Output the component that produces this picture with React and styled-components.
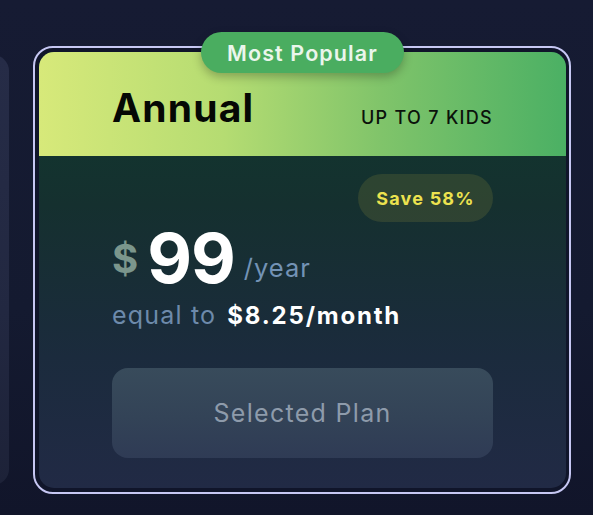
import React from "react";
import styled, { createGlobalStyle } from "styled-components";

const Global = createGlobalStyle`
  html, body { margin: 0; padding: 0; }
  body {
    width: 593px;
    height: 515px;
    overflow: hidden;
    background: linear-gradient(180deg, #161b33 0%, #141a30 60%, #11152a 100%);
    font-family: Inter, "Noto Sans", sans-serif;
  }
`;

const Stage = styled.div`
  height: 515px;
  display: flex;
  align-items: center;
  overflow: hidden;
`;

const Track = styled.div`
  display: flex;
  align-items: center;
  gap: 24px;
  margin-left: -231px;
  margin-top: 25px;
`;

const SideCard = styled.div`
  width: 240px;
  height: 430px;
  flex-shrink: 0;
  border-radius: 16px;
  background: linear-gradient(180deg, #262c47 0%, #222841 60%, #1d2238 100%);
`;

const Frame = styled.div`
  position: relative;
  width: 538px;
  height: 448px;
  box-sizing: border-box;
  flex-shrink: 0;
  border: 2px solid #c6c7f3;
  border-radius: 20px;
  padding: 4px 3px 4px 4px;
  background: #10152a;
`;

const Badge = styled.div`
  position: absolute;
  top: -16px;
  left: 166px;
  width: 203px;
  height: 41px;
  border-radius: 21px;
  background: #4aad60;
  color: #eaf6ec;
  font-size: 21.5px;
  font-weight: 600;
  letter-spacing: 1.1px;
  display: flex;
  align-items: center;
  justify-content: center;
  box-shadow: 0 4px 10px rgba(0, 0, 0, 0.25);
  z-index: 2;
`;

const Inner = styled.div`
  height: 100%;
  border-radius: 15px;
  overflow: hidden;
  display: flex;
  flex-direction: column;
  background: linear-gradient(180deg, #0f3a2e 0%, #15302f 35%, #1b2b3d 70%, #212a45 100%);
`;

const Header = styled.div`
  height: 104px;
  flex-shrink: 0;
  box-sizing: border-box;
  padding: 0 73px;
  display: flex;
  align-items: center;
  justify-content: space-between;
  background: linear-gradient(90deg, #d7e97a 0%, #b5dc72 35%, #80c46a 65%, #4bb064 100%);
`;

const PlanName = styled.div`
  font-size: 39px;
  font-weight: 700;
  color: #050805;
  letter-spacing: 1.2px;
  margin-top: 6px;
`;

const PlanLimit = styled.div`
  font-size: 18px;
  font-weight: 500;
  color: #0b120b;
  letter-spacing: 1.3px;
  margin-top: 26px;
`;

const Body = styled.div`
  flex: 1;
  padding: 18px 73px 30px;
  display: flex;
  flex-direction: column;
`;

const SaveRow = styled.div`
  display: flex;
  justify-content: flex-end;
`;

const SavePill = styled.div`
  width: 135px;
  height: 48px;
  border-radius: 24px;
  background: rgba(180, 170, 60, 0.16);
  color: #ece24f;
  font-size: 18px;
  font-weight: 700;
  letter-spacing: 1.2px;
  display: flex;
  align-items: center;
  justify-content: center;
`;

const PriceRow = styled.div`
  display: flex;
  align-items: baseline;
  margin-top: 2px;
  height: 70px;
`;

const Currency = styled.span`
  font-size: 40px;
  font-weight: 700;
  color: #7b968c;
  margin-right: 9px;
  margin-bottom: 11px;
  align-self: flex-end;
`;

const Amount = styled.span`
  font-size: 69px;
  font-weight: 700;
  color: #ffffff;
  letter-spacing: -1px;
  line-height: 1;
`;

const Period = styled.span`
  font-size: 25.5px;
  color: #7393b5;
  margin-left: 9px;
  letter-spacing: 1px;
  align-self: flex-end;
  margin-bottom: 11px;
`;

const Equal = styled.div`
  margin-top: 6px;
  font-size: 25px;
  color: #6d8aab;
  letter-spacing: 1.2px;
  display: flex;
  align-items: baseline;
  gap: 11px;
`;

const Monthly = styled.span`
  color: #ffffff;
  font-weight: 700;
  font-size: 24px;
  letter-spacing: 1.8px;
`;

const SelectedButton = styled.button`
  margin-top: auto;
  width: 100%;
  height: 90px;
  border: none;
  border-radius: 16px;
  background: linear-gradient(180deg, #384b5b 0%, #334357 55%, #2f3b55 100%);
  color: #8e9bab;
  font-family: inherit;
  font-size: 25px;
  font-weight: 400;
  letter-spacing: 1.3px;
  cursor: default;
`;

export default function App() {
  return (
    <>
      <Global />
      <Stage>
        <Track>
          <SideCard />
          <Frame>
            <Badge>Most Popular</Badge>
            <Inner>
              <Header>
                <PlanName>Annual</PlanName>
                <PlanLimit>UP TO 7 KIDS</PlanLimit>
              </Header>
              <Body>
                <SaveRow>
                  <SavePill>Save 58%</SavePill>
                </SaveRow>
                <PriceRow>
                  <Currency>$</Currency>
                  <Amount>99</Amount>
                  <Period>/year</Period>
                </PriceRow>
                <Equal>
                  equal to <Monthly>$8.25/month</Monthly>
                </Equal>
                <SelectedButton>Selected Plan</SelectedButton>
              </Body>
            </Inner>
          </Frame>
        </Track>
      </Stage>
    </>
  );
}
